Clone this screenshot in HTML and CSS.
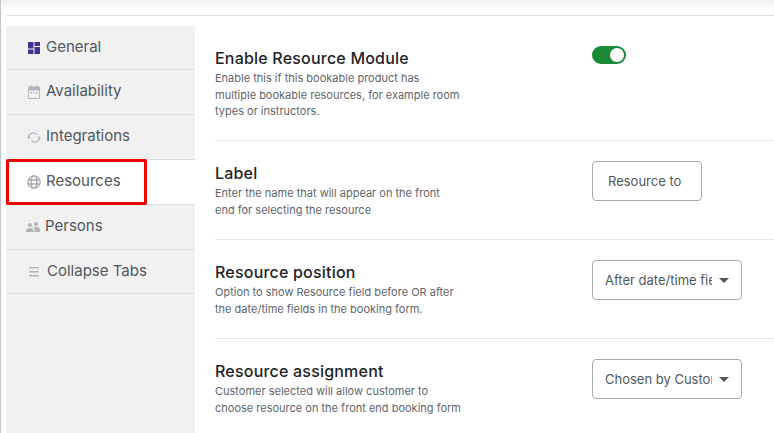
FILE: index.html
```html
<!DOCTYPE html>
<html lang="en">
<head>
<meta charset="utf-8">
<title>Resources</title>
<link rel="stylesheet" href="styles.css">
</head>
<body>
<div class="topbar"></div>
<div class="panel">
  <nav class="tabs">
    <a class="tab"><svg class="icon" viewBox="0 0 12 12"><path fill="#46318f" d="M0 0h5.500v6.500H0zM6.500 0H12v4H6.500zM6.500 5H12v7H6.500zM0 7.500h5.500V12H0z"/></svg><span>General</span></a>
    <a class="tab"><svg class="icon icon-cal" viewBox="0 0 12 14"><path fill="#b4b4b8" d="M2.500 0h1v1.500h5V0h1v1.500H11a1 1 0 0 1 1 1V13a1 1 0 0 1-1 1H1a1 1 0 0 1-1-1V2.500a1 1 0 0 1 1-1h1.500z"/><path fill="#f1f1f1" d="M1 5.500h10V13H1z"/><path fill="#b4b4b8" d="M2.500 7H4v1.500H2.500zM5.300 7h1.500v1.500H5.300zM8 7h1.500v1.500H8z"/></svg><span>Availability</span></a>
    <a class="tab tab-sync"><svg class="icon icon-sync" viewBox="0 0 14 11" fill="none" stroke="#b4b4b8" stroke-width="1.200"><path d="M1.500 5.500a4.600 4.600 0 0 1 8-3"/><path d="M12.500 5.500a4.600 4.600 0 0 1-8 3"/><path fill="#b4b4b8" stroke="none" d="M10.500 6.200h3.500L12.200 3.800zM3.500 4.800H0l1.800 2.400z"/></svg><span>Integrations</span></a>
    <a class="tab tab-globe active"><svg class="icon icon-globe" viewBox="0 0 14 14" fill="none" stroke="#a9a9ad" stroke-width="1.300"><circle cx="7" cy="7" r="6.200"/><ellipse cx="7" cy="7" rx="2.800" ry="6.200"/><path d="M1 5h12M1 9h12"/></svg><span>Resources</span></a>
    <a class="tab tab-persons"><svg class="icon icon-persons" viewBox="0 0 14 10"><path fill="#b4b4b8" d="M4 1a2 2 0 1 1 0 4 2 2 0 0 1 0-4zM0 10V8.300C0 6.800 2 6 4 6s3.500.8 3.500 2.300V10zM10 0a2 2 0 1 1 0 4 2 2 0 0 1 0-4zM8.500 10V8c0-1-.4-2-1-2.500.7-.6 1.600-.8 2.500-.8 2 0 4 1 4 2.800V10z"/></svg><span>Persons</span></a>
    <a class="tab tab-bars"><svg class="icon icon-bars" viewBox="0 0 10 10"><path fill="#b4b4b8" d="M0 0h10v1.500H0zM0 4h10v1.500H0zM0 8h10v1.500H0z"/></svg><span>Collapse Tabs</span></a>
  </nav>
  <div class="highlight"></div>
  <main class="fields">
    <section class="row row-enable">
      <div class="info">
        <h2>Enable Resource Module</h2>
        <p>Enable this if this bookable product has multiple bookable resources, for example room types or instructors.</p>
      </div>
      <div class="control"><span class="switch"><span class="knob"></span></span></div>
    </section>
    <section class="row row-label">
      <div class="info">
        <h2>Label</h2>
        <p>Enter the name that will appear on the front end for selecting the resource</p>
      </div>
      <div class="control"><div class="box box-input"><span class="value">Resource to</span></div></div>
    </section>
    <section class="row row-select">
      <div class="info">
        <h2>Resource position</h2>
        <p>Option to show Resource field before OR after the date/time fields in the booking form.</p>
      </div>
      <div class="control"><div class="box box-select"><span class="value">After date/time fields</span><i class="caret"></i></div></div>
    </section>
    <section class="row row-select row-last">
      <div class="info">
        <h2>Resource assignment</h2>
        <p>Customer selected will allow customer to choose resource on the front end booking form</p>
      </div>
      <div class="control"><div class="box box-select"><span class="value">Chosen by Customer</span><i class="caret"></i></div></div>
    </section>
  </main>
</div>
</body>
</html>
```

FILE: styles.css
```css
* { box-sizing: border-box; }
html, body { height: 100%; }
body {
  margin: 0;
  height: 433px;
  overflow: hidden;
  background: #fff;
  font-family: Inter, "Liberation Sans", sans-serif;
  color: #50575e;
  border-left: 1px solid #c3c4c7;
  position: relative;
}
.topbar {
  height: 16px;
  margin-left: 5px;
  border-bottom: 1px solid #e2e2e2;
  position: relative;
}
.topbar::before {
  content: "";
  position: absolute;
  left: -5px;
  right: 0;
  top: 0;
  height: 10px;
  background: linear-gradient(#f1f1f1, #fff);
}
.panel {
  display: flex;
  margin: 10px 0 0 5px;
  position: relative;
}
.tabs {
  width: 189px;
  height: 407px;
  flex: none;
  background: #f1f1f1;
  display: flex;
  flex-direction: column;
}
.tab {
  height: 45px;
  display: flex;
  align-items: center;
  padding-left: 22px;
  gap: 6px;
  font-size: 15px;
  color: #50575e;
  border-bottom: 1px solid #dcdcde;
}
.tab span { margin-top: -4px; }
.tab:first-child { height: 44px; }
.tab:last-child { height: 44px; }
.tab:first-child span, .tab:last-child span { margin-top: -2px; }
.tab.active { background: #fff; }
.tab-sync { gap: 5px; }
.tab-globe { padding-left: 21px; gap: 5px; }
.tab-persons { padding-left: 20px; gap: 5px; }
.tab-persons span { margin-top: -3px; }
.tab-bars { padding-left: 23px; gap: 8px; }
.icon { width: 12px; height: 12px; flex: none; }
.icon-cal { height: 14px; }
.icon-sync { width: 14px; height: 11px; margin-left: -1px; }
.icon-globe { width: 14px; height: 14px; }
.icon-persons { width: 14px; height: 10px; }
.icon-bars { width: 10px; height: 10px; }
.highlight {
  position: absolute;
  left: 0;
  top: 133px;
  width: 141px;
  height: 46px;
  border: 3px solid #f00000;
  border-radius: 2px;
}
.fields {
  flex: 1;
  min-width: 0;
  margin-left: 20px;
  display: flex;
  flex-direction: column;
}
.row {
  display: flex;
  border-bottom: 1px solid #e6e6e6;
  height: 99px;
  padding-top: 22px;
}
.row-enable { height: 115px; }
.row-last { border-bottom: 0; }
.info { width: 377px; flex: none; }
.info h2 {
  margin: 0;
  font-size: 16px;
  font-weight: 500;
  letter-spacing: .2px;
  line-height: 20px;
  color: #1d2327;
}
.info p {
  margin: 2px 0 0;
  width: 247px;
  font-size: 11px;
  line-height: 16.500px;
  color: #5f656b;
}
.control { flex: 1; }
.switch {
  display: block;
  width: 34px;
  height: 18px;
  margin-top: -2px;
  border-radius: 9px;
  background: #1a8a37;
  position: relative;
}
.knob {
  position: absolute;
  right: 2px;
  top: 2px;
  width: 14px;
  height: 14px;
  border-radius: 50%;
  background: #fff;
}
.box {
  height: 40px;
  margin-top: -2px;
  border: 1px solid #a7aaad;
  border-radius: 4px;
  background: #fff;
  display: flex;
  align-items: center;
  font-size: 13px;
  color: #50575e;
}
.box-input { width: 110px; padding: 0 15px; }
.box-select { width: 150px; padding: 0 12px; }
.value { overflow: hidden; white-space: nowrap; }
.box-input .value { width: 80px; }
.box-select .value { width: 107px; flex: none; }
.caret {
  margin-left: 7px;
  width: 0;
  height: 0;
  border-left: 5px solid transparent;
  border-right: 5px solid transparent;
  border-top: 5px solid #50575e;
}
```
